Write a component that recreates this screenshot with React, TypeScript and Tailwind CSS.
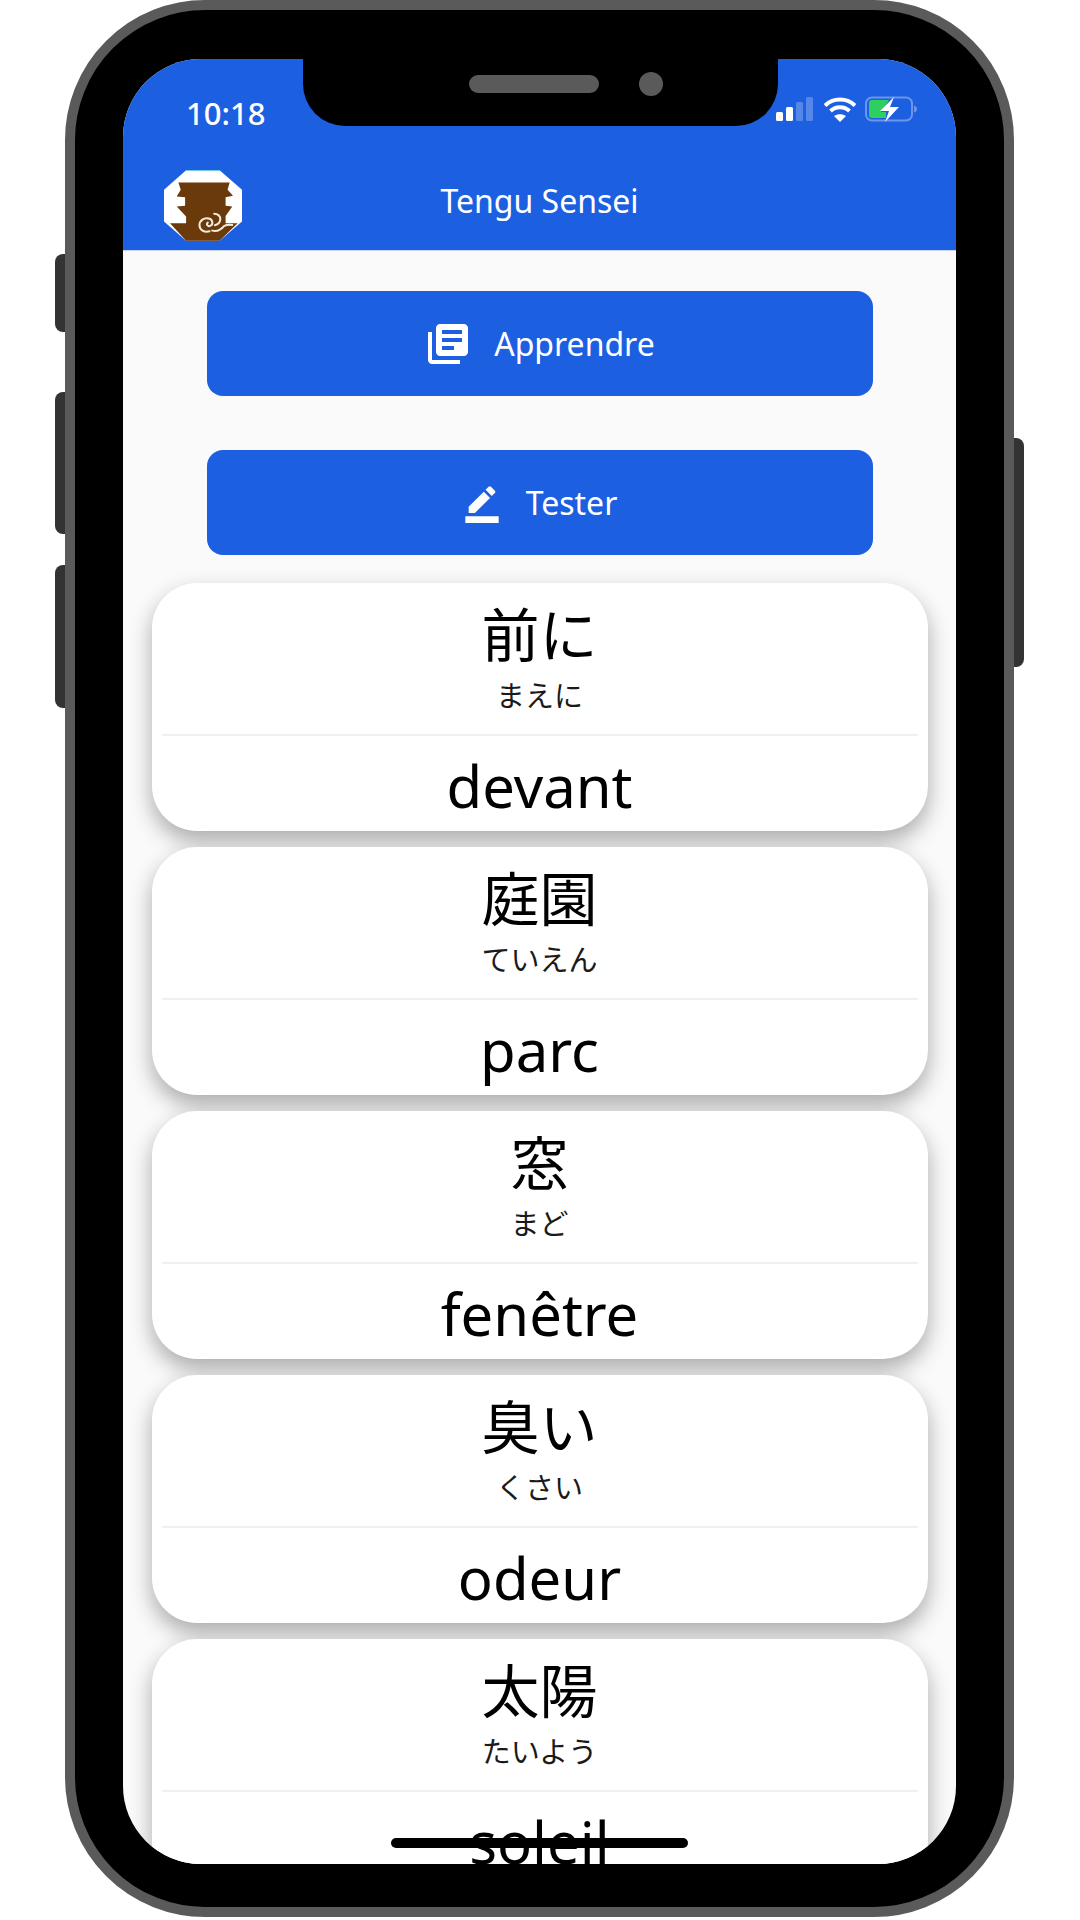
import { MdBorderColor, MdLibraryBooks } from "react-icons/md";

type Word = {
  kanji: string;
  kana: string;
  meaning: string;
};

const words: Word[] = [
  { kanji: "前に", kana: "まえに", meaning: "devant" },
  { kanji: "庭園", kana: "ていえん", meaning: "parc" },
  { kanji: "窓", kana: "まど", meaning: "fenêtre" },
  { kanji: "臭い", kana: "くさい", meaning: "odeur" },
  { kanji: "太陽", kana: "たいよう", meaning: "soleil" },
];

function Logo() {
  return (
    <svg viewBox="42 42 233 210" className="h-[73px] w-[78px]">
      <polygon points="108,42 208,42 275,100 275,195 208,252 108,252 42,195 42,100" fill="#ffffff" />
      <path d="M108 42.5H208" stroke="#4fc3c8" strokeWidth="2" />
      <polygon
        points="85,78 238,78 232,100 248,118 226,122 226,148 246,150 226,178 226,200 262,200 208,252 108,252 60,200 108,200 108,180 80,150 105,148 105,122 80,120 92,100"
        fill="#6b3a0a"
      />
      <path
        d="M178 224c-16 4-30-4-30-18 0-14 14-24 28-20 12 3 14 18 4 22-7 3-13-5-7-10M192 172c10 0 20 6 18 18-1 8-8 14-16 16M186 222c14 4 26-2 36-14 6-3 14-4 24-3"
        fill="none"
        stroke="#f5ebdc"
        strokeWidth="6"
        strokeLinecap="round"
      />
    </svg>
  );
}

function StatusIcons() {
  return (
    <div className="flex items-center">
      <svg viewBox="0 0 38 24" className="h-[24px] w-[38px]">
        <rect x="0" y="15" width="7" height="9" rx="1.5" fill="#ffffff" />
        <rect x="10" y="10" width="7" height="14" rx="1.5" fill="#ffffff" />
        <rect x="20" y="5" width="7" height="19" rx="1.5" fill="#ffffff" fillOpacity="0.25" />
        <rect x="30" y="0" width="7" height="24" rx="1.5" fill="#ffffff" fillOpacity="0.25" />
      </svg>
      <svg viewBox="0 0 32 25" className="ml-[10px] h-[25px] w-[32px]">
        <path d="M1 8.5C9.5 .5 22.500 .5 31 8.500" fill="none" stroke="#ffffff" strokeWidth="4" />
        <path d="M6.500 14C12 9 20 9 25.500 14" fill="none" stroke="#ffffff" strokeWidth="4" />
        <path d="M16 25l-6-6c3.500-2.500 8.500-2.500 12 0z" fill="#ffffff" />
      </svg>
      <svg viewBox="0 0 52 26" className="ml-[9px] h-[26px] w-[52px]">
        <rect x="1" y="1.500" width="46" height="23" rx="6" fill="none" stroke="#ffffff" strokeOpacity="0.35" strokeWidth="2" />
        <path d="M4 7a3 3 0 0 1 3-3h17l-8 12h5v6H7a3 3 0 0 1-3-3z" fill="#2fcf5e" />
        <path d="M49 9.500c2 .5 3 2 3 3.500s-1 3-3 3.500z" fill="#ffffff" fillOpacity="0.35" />
        <path d="M29 1L15 15h9l-4 11 14-15h-9z" fill="#ffffff" />
      </svg>
    </div>
  );
}

function WordCard({ word }: { word: Word }) {
  return (
    <div className="flex h-[248px] w-[776px] shrink-0 flex-col items-center rounded-[45px] bg-white px-[10px] shadow-[0_10px_22px_rgba(0,0,0,0.32)]">
      <div className="flex h-[153px] w-full flex-col items-center border-b-2 border-[#f0f0f0] pt-[12px]">
        <p className="text-[58px] leading-[80px] text-black">{word.kanji}</p>
        <p className="text-[29px] leading-[42px] text-[#1a1a1a]">{word.kana}</p>
      </div>
      <p className="pt-[10px] text-[58px] leading-[80px] text-black">{word.meaning}</p>
    </div>
  );
}

export default function App() {
  return (
    <div
      className="relative h-[1920px] w-[1080px] overflow-hidden bg-white"
      style={{ fontFamily: '"Noto Sans", "Noto Sans CJK JP", sans-serif' }}
    >
      {/* side buttons */}
      <div className="absolute left-[55px] top-[254px] h-[78px] w-[12px] rounded-l-[8px] bg-[#333333]" />
      <div className="absolute left-[55px] top-[392px] h-[142px] w-[12px] rounded-l-[8px] bg-[#333333]" />
      <div className="absolute left-[55px] top-[565px] h-[143px] w-[12px] rounded-l-[8px] bg-[#333333]" />
      <div className="absolute left-[1012px] top-[438px] h-[229px] w-[12px] rounded-r-[8px] bg-[#333333]" />

      <div className="relative ml-[65px] h-[1917px] w-[949px] rounded-[140px] border-[10px] border-[#5a5a5a] bg-black pl-[48px] pt-[49px]">
        <div className="relative h-[1805px] w-[833px] overflow-hidden rounded-[78px] bg-[#fafafa]">
          {/* header */}
          <div className="flex h-[192px] flex-col border-b border-[#c9d4e8] bg-[#1c5fe1]">
            <div className="flex h-[110px] items-start justify-between pl-[63px] pr-[39px] pt-[27px]">
              <span className="text-[31px] font-medium leading-[54px] text-white">10:18</span>
              <div className="pt-[10px]">
                <StatusIcons />
              </div>
            </div>
            <div className="relative flex flex-1 items-center justify-center">
              <div className="absolute left-[41px] top-[0px]">
                <Logo />
              </div>
              <span className="pb-[18px] text-[32px] text-white">Tengu Sensei</span>
            </div>
          </div>

          {/* content */}
          <div className="flex flex-col items-center pt-[40px]">
            <div className="flex h-[105px] w-[666px] items-center justify-center gap-[22px] rounded-[16px] bg-[#1c5fe1] text-white">
              <MdLibraryBooks size={48} />
              <span className="text-[32px]">Apprendre</span>
            </div>
            <div className="mt-[54px] flex h-[105px] w-[666px] items-center justify-center gap-[24px] rounded-[16px] bg-[#1c5fe1] text-white">
              <MdBorderColor size={40} />
              <span className="text-[32px]">Tester</span>
            </div>
            <div className="mt-[28px] flex flex-col gap-[16px]">
              {words.map((word) => (
                <WordCard key={word.kanji} word={word} />
              ))}
            </div>
          </div>

          {/* notch */}
          <div className="absolute left-[180px] top-0 h-[67px] w-[475px] rounded-b-[42px] bg-black">
            <div className="absolute left-[166px] top-[16px] h-[18px] w-[130px] rounded-full bg-[#5a5a5a]" />
            <div className="absolute left-[336px] top-[13px] h-[24px] w-[24px] rounded-full bg-[#5a5a5a]" />
          </div>

          {/* home indicator */}
          <div className="absolute bottom-[16px] left-[268px] h-[10px] w-[297px] rounded-full bg-black" />
        </div>
      </div>
    </div>
  );
}
